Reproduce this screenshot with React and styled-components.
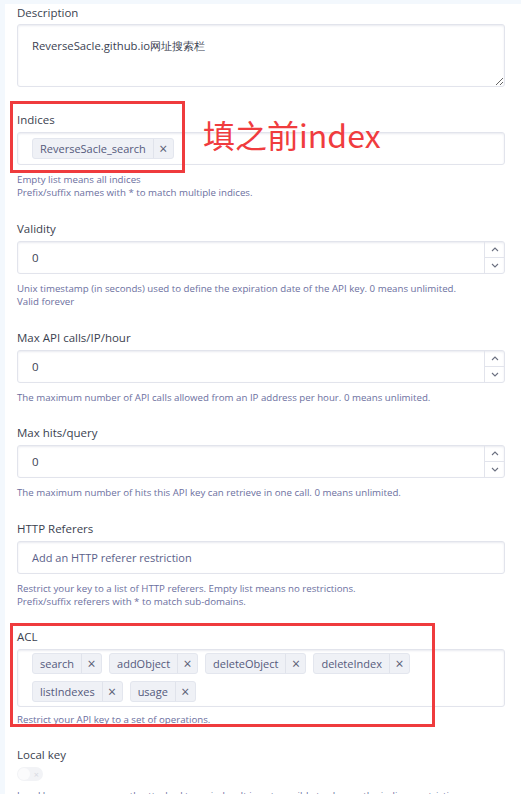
import React from 'react';
import styled, { createGlobalStyle } from 'styled-components';

const GlobalStyle = createGlobalStyle`
  html, body {
    margin: 0;
    padding: 0;
    background: #f3f8fd;
    font-family: 'Segoe UI', 'Open Sans', 'Noto Sans', sans-serif;
    overflow: hidden;
  }
`;

const aclList = ['search', 'addObject', 'deleteObject', 'deleteIndex', 'listIndexes', 'usage'];

const Tag = ({ label }) => (
  <TagBox>
    <TagText>{label}</TagText>
    <TagClose>×</TagClose>
  </TagBox>
);

const NumberField = ({ label, value, help, gap }) => (
  <Field $gap={gap}>
    <Label>{label}</Label>
    <NumberWrap>
      <NumberValue>{value}</NumberValue>
      <Spinner>
        <SpinBtn>
          <svg width="8" height="5" viewBox="0 0 8 5"><path d="M1 4 4 1 7 4" fill="none" stroke="#6b7080" strokeWidth="1.1" /></svg>
        </SpinBtn>
        <SpinBtn $bottom>
          <svg width="8" height="5" viewBox="0 0 8 5"><path d="M1 1 4 4 7 1" fill="none" stroke="#6b7080" strokeWidth="1.1" /></svg>
        </SpinBtn>
      </Spinner>
    </NumberWrap>
    {help.map((h) => (
      <Help key={h}>{h}</Help>
    ))}
  </Field>
);

const App = () => (
  <>
    <GlobalStyle />
    <Panel>
      <Field $gap={25}>
        <Label $tight>Description</Label>
        <TextArea defaultValue="ReverseSacle.github.io网址搜索栏" />
      </Field>

      <Field $gap={22}>
        <Marked $w={175} $h={72} $top={-11}>
          <Label>Indices</Label>
          <TagInput>
            <Tag label="ReverseSacle_search" />
          </TagInput>
        </Marked>
        <Annotation>填之前index</Annotation>
        <Help>Empty list means all indices</Help>
        <Help>Prefix/suffix names with * to match multiple indices.</Help>
      </Field>

      <NumberField
        label="Validity"
        value="0"
        gap={22}
        help={[
          'Unix timestamp (in seconds) used to define the expiration date of the API key. 0 means unlimited.',
          'Valid forever',
        ]}
      />
      <NumberField
        label="Max API calls/IP/hour"
        value="0"
        help={['The maximum number of API calls allowed from an IP address per hour. 0 means unlimited.']}
      />
      <NumberField
        label="Max hits/query"
        value="0"
        gap={22}
        help={['The maximum number of hits this API key can retrieve in one call. 0 means unlimited.']}
      />

      <Field>
        <Label>HTTP Referers</Label>
        <TextInput>Add an HTTP referer restriction</TextInput>
        <Help>Restrict your key to a list of HTTP referers. Empty list means no restrictions.</Help>
        <Help>Prefix/suffix referers with * to match sub-domains.</Help>
      </Field>

      <Field $gap={21}>
        <Marked $w={425} $h={104} $top={-6}>
          <Label>ACL</Label>
          <TagInput $rows>
            {aclList.map((a) => (
              <Tag key={a} label={a} />
            ))}
          </TagInput>
          <Help $near>Restrict your API key to a set of operations.</Help>
        </Marked>
      </Field>

      <Field>
        <Label>Local key</Label>
        <Toggle>
          <Knob />
          <ToggleX>×</ToggleX>
        </Toggle>
        <Help>Local keys are permanently attached to an index. It is not possible to change the indices restriction.</Help>
      </Field>
    </Panel>
  </>
);

const Panel = styled.main`
  margin: 4px 0 0 5px;
  padding: 1px 16px 0 12px;
  background: #fff;
  min-height: 800px;
`;

const Field = styled.section`
  position: relative;
  margin-bottom: ${(p) => p.$gap || 21}px;
`;

const Marked = styled.div`
  position: relative;
  &::after {
    content: '';
    position: absolute;
    left: -7px;
    top: ${(p) => p.$top}px;
    width: ${(p) => p.$w}px;
    height: ${(p) => p.$h}px;
    box-sizing: border-box;
    border: 3px solid #ef3b3d;
    pointer-events: none;
  }
`;

const Annotation = styled.div`
  position: absolute;
  left: 186px;
  top: 2px;
  font-family: 'Noto Sans CJK SC', 'Noto Sans', sans-serif;
  font-size: 32px;
  line-height: 40px;
  color: #f03c3e;
  white-space: nowrap;
`;

const Label = styled.label`
  display: block;
  font-size: 11.5px;
  line-height: 16px;
  color: #3b3f4f;
  margin-bottom: ${(p) => (p.$tight ? 3 : 4)}px;
`;

const boxBase = `
  box-sizing: border-box;
  width: 100%;
  border: 1px solid #e2e4ec;
  border-radius: 3px;
  box-shadow: inset 0 1px 2px rgba(70, 80, 130, 0.12);
  background: #fff;
`;

const TextArea = styled.textarea`
  ${boxBase}
  display: block;
  height: 63px;
  padding: 13px 14px;
  font-family: inherit;
  font-size: 11.3px;
  color: #3b3f52;
  resize: vertical;
  outline: none;
`;

const TextInput = styled.div`
  ${boxBase}
  height: 33px;
  padding: 0 14px;
  display: flex;
  align-items: center;
  font-size: 11px;
  color: #5b5f8a;
`;

const NumberWrap = styled.div`
  ${boxBase}
  height: 33px;
  display: flex;
  align-items: stretch;
`;

const NumberValue = styled.div`
  flex: 1;
  display: flex;
  align-items: center;
  padding-left: 14px;
  font-size: 11.5px;
  color: #3b3f52;
`;

const Spinner = styled.div`
  width: 19px;
  display: flex;
  flex-direction: column;
  border-left: 1px solid #e2e4ec;
`;

const SpinBtn = styled.div`
  flex: 1;
  display: flex;
  align-items: center;
  justify-content: center;
  border-top: ${(p) => (p.$bottom ? '1px solid #e2e4ec' : 'none')};
`;

const TagInput = styled.div`
  ${boxBase}
  min-height: 33px;
  padding: ${(p) => (p.$rows ? '3px 14px 4px' : '0 14px')};
  display: flex;
  flex-wrap: wrap;
  gap: 7px 7px;
  align-content: ${(p) => (p.$rows ? 'flex-start' : 'center')};
  align-items: center;
`;

const TagBox = styled.span`
  display: inline-flex;
  align-items: stretch;
  height: 21px;
  box-sizing: border-box;
  border: 1px solid #e3e6ee;
  border-radius: 3px;
  background: #eff1f6;
  font-size: 11px;
  color: #555a7c;
`;

const TagText = styled.span`
  display: flex;
  align-items: center;
  padding: 0 7px;
`;

const TagClose = styled.span`
  display: flex;
  align-items: center;
  justify-content: center;
  width: 19px;
  border-left: 1px solid #e0e3eb;
  font-size: 14px;
  color: #5a5e75;
`;

const Help = styled.p`
  margin: 0;
  font-size: 9.7px;
  line-height: 13px;
  color: #6c6fa0;
  white-space: nowrap;
  &:first-of-type {
    margin-top: ${(p) => (p.$near ? 6 : 8)}px;
  }
`;

const Toggle = styled.div`
  position: relative;
  width: 26px;
  height: 14px;
  border-radius: 7px;
  background: #f2f3f6;
  display: flex;
  align-items: center;
  justify-content: flex-end;
  padding-right: 4px;
  box-sizing: border-box;
`;

const Knob = styled.span`
  position: absolute;
  left: 1px;
  top: 1px;
  width: 12px;
  height: 12px;
  border-radius: 50%;
  background: #fbfbfc;
`;

const ToggleX = styled.span`
  font-size: 9px;
  line-height: 1;
  color: #d8dae2;
`;

export default App;
